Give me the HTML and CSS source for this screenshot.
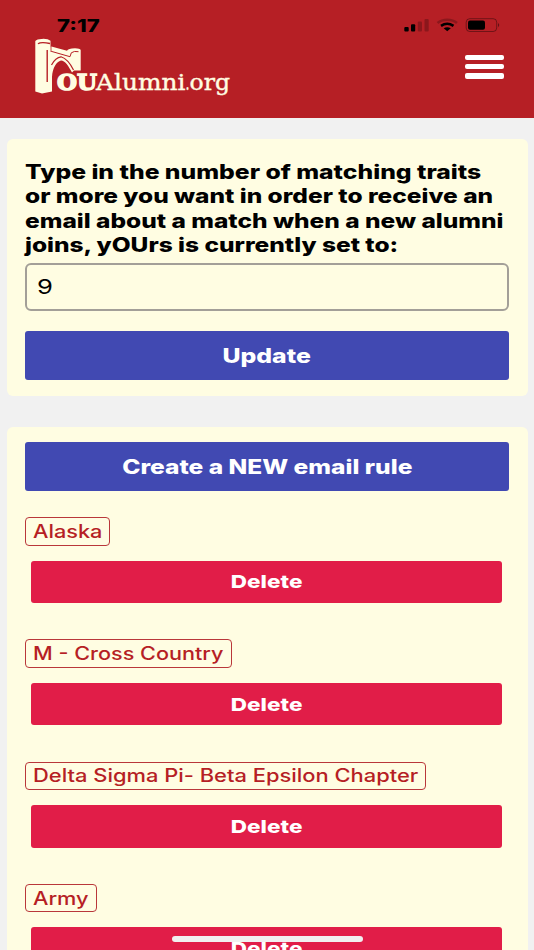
FILE: index.html
```html
<!DOCTYPE html>
<html lang="en">
<head>
<meta charset="utf-8">
<title>OUAlumni.org</title>
<link rel="stylesheet" href="styles.css">
</head>
<body>
<header class="header">
  <div class="status">
    <span class="time"><span class="wide">7:17</span></span>
    <svg class="status-icons" width="96" height="18" viewBox="0 0 96 18">
      <rect x="0.300" y="11" width="4.400" height="4.400" rx="1"/>
      <rect x="7" y="8.200" width="4.200" height="7.200" rx="1"/>
      <g opacity=".23"><rect x="13.800" y="5.500" width="4.200" height="9.900" rx="1"/><rect x="20.500" y="2.900" width="4.200" height="12.500" rx="1"/></g>
      <path d="M33.500 7C38.500 2.600 48 2.600 53 7" fill="none" stroke="#000" stroke-opacity=".23" stroke-width="2.500"/>
      <path d="M37 9.900Q43.200 5.600 49.500 9.900" fill="none" stroke="#000" stroke-width="2.500"/>
      <path d="M39.700 12.300Q43.200 10 46.800 12.300L43.200 15.200Z"/>
      <rect x="62.200" y="2.700" width="30.500" height="12.800" rx="3.500" fill="none" stroke="#000" stroke-opacity=".38"/>
      <rect x="64" y="4.500" width="17" height="9.200" rx="2"/>
      <path d="M94 7Q96.500 9.100 94 11.200Z" opacity=".45"/>
    </svg>
  </div>
  <div class="bar">
    <svg class="logo" width="200" height="60" viewBox="32 37 200 60" role="img" aria-label="OUAlumni.org">
      <path class="cream" d="M35.300 41Q37 38.800 42 38.900Q48 38.600 50.500 40.800V46.200L67 50.800Q68 48.500 75 48.300Q80 48.400 80.700 50V70.500H74L72 72.500C68.500 66 65 60.500 61 60.500C56.500 61.500 52.500 68 52 77V91.500L42 93.600L35.300 91.500Z"/>
      <g fill="none" stroke="#b61f25">
        <path d="M38 43.800Q41 41.700 50 43.500M47.200 50V82" stroke-width="1.400"/>
        <path d="M51.200 51.300L70 56.700L71.300 52.800Q74 50.700 78.500 51.700" stroke-width="1"/>
        <path d="M51.500 65Q55.500 57.300 61 56.800Q68 59 73.500 70" stroke-width="1.200"/>
        <path d="M51 46V52" stroke-width=".8"/>
      </g>
      <text class="logo-bold" x="57" y="90" textLength="40" lengthAdjust="spacingAndGlyphs">OU</text>
      <text class="logo-light" x="96" y="90" textLength="89.500" lengthAdjust="spacingAndGlyphs">Alumni</text>
      <text class="logo-light" x="185.500" y="90" textLength="4" lengthAdjust="spacingAndGlyphs">.</text>
      <text class="logo-light" x="189.500" y="90" textLength="40.500" lengthAdjust="spacingAndGlyphs">org</text>
    </svg>
    <button class="menu" aria-label="Menu"><i></i><i></i><i></i></button>
  </div>
</header>
<main class="content">
  <section class="card settings">
    <label class="prompt" for="traits">
      <span class="wide">Type in the number of matching traits</span>
      <span class="wide">or more you want in order to receive an</span>
      <span class="wide">email about a match when a new alumni</span>
      <span class="wide">joins, yOUrs is currently set to:</span>
    </label>
    <div class="field" id="traits"><span class="wide">9</span></div>
    <button class="primary"><span class="wide">Update</span></button>
  </section>
  <section class="card rules">
    <button class="primary"><span class="wide">Create a NEW email rule</span></button>
    <article class="rule"><div class="tag t1"><span class="wide">Alaska</span></div><button class="delete"><span class="wide">Delete</span></button></article>
    <article class="rule"><div class="tag t2"><span class="wide">M - Cross Country</span></div><button class="delete"><span class="wide">Delete</span></button></article>
    <article class="rule"><div class="tag t3"><span class="wide">Delta Sigma Pi- Beta Epsilon Chapter</span></div><button class="delete"><span class="wide">Delete</span></button></article>
    <article class="rule"><div class="tag t4"><span class="wide">Army</span></div><button class="delete"><span class="wide">Delete</span></button></article>
  </section>
</main>
<div class="home-indicator"></div>
</body>
</html>
```
FILE: styles.css
```css
* { box-sizing: border-box; }
html, body { height: 950px; overflow: hidden; }
body { margin: 0; background: #f1f1f1; color: #000; font-family: Inter, "Liberation Sans", sans-serif; display: flex; flex-direction: column; }
button { border: 0; margin: 0; padding: 0; font: inherit; color: #fff; }
.wide { display: inline-block; white-space: nowrap; transform: scaleX(1.224); }
.header { height: 118px; flex: none; background: #b61f25; }
.status { height: 38px; padding: 16px 34px 0 57px; display: flex; justify-content: space-between; align-items: flex-start; }
.time { font-size: 17px; line-height: 20px; font-weight: 800; }
.time .wide { transform-origin: left; transform: scaleX(1.3); }
.bar { display: flex; justify-content: space-between; padding: 0 30px 0 32px; }
.logo { display: block; margin-top: -1px; }
.cream, .logo-bold, .logo-light { fill: #fffde2; }
.logo-bold { font: 700 22.500px "DejaVu Serif", serif; stroke: #fffde2; stroke-width: 1.500; }
.logo-light { font: 400 22px "DejaVu Serif", serif; stroke: #fffde2; stroke-width: .4; }
.menu { width: 39px; margin-top: 17px; background: none; display: flex; flex-direction: column; gap: 4px; }
.menu i { height: 5.200px; width: 39px; border-radius: 2px; background: #fff; }
.content { flex: 1; min-height: 0; padding: 21px 6px 0 7px; display: flex; flex-direction: column; gap: 31px; }
.card { background: #fffde2; border-radius: 6px; padding: 0 19px 0 18px; }
.settings { flex: none; height: 256.500px; padding-top: 21px; }
.prompt { display: flex; flex-direction: column; align-items: flex-start; font-size: 20px; font-weight: 800; line-height: 24.400px; }
.prompt .wide, .field .wide, .tag .wide { transform-origin: left; }
.prompt .wide:first-child { transform: scaleX(1.234); }
.field { height: 48px; margin-top: 5px; border: 2px solid #a39f98; border-radius: 6px; padding: 0 10px; display: flex; align-items: center; font-size: 20px; }
.field .wide { transform: scaleX(1.28); }
.primary { display: flex; align-items: center; justify-content: center; width: 100%; height: 49px; border-radius: 3px; background: #4149b2; font-size: 20px; font-weight: 800; }
.primary .wide { transform: scaleX(1.227); }
.settings .primary { height: 49px; margin-top: 20.300px; padding-top: 1px; }
.settings .primary .wide { transform: scaleX(1.24); }
.rules { flex: 1; min-height: 0; padding-top: 15.500px; overflow: hidden; border-radius: 6px 6px 0 0; }
.rule { height: 122.300px; padding-top: 26px; }
.tag { height: 28.500px; border: 1px solid #b9373a; border-radius: 4px; padding-left: 7px; display: flex; align-items: center; font-size: 18px; font-weight: 500; color: #b61f25; }
.tag .wide { transform: scaleX(1.208); }
.t1 { width: 85px; }
.t2 { width: 206.500px; }
.t2 .wide { transform: scaleX(1.2); }
.t3 { width: 401px; }
.t3 .wide { transform: scaleX(1.216); }
.t4 { width: 72px; }
.delete { display: flex; align-items: center; justify-content: center; width: calc(100% - 13px); height: 42.500px; margin: 15px 6px 0; border-radius: 3px; background: #e11d48; font-size: 18px; font-weight: 800; }
.delete .wide { transform: scaleX(1.25); }
.home-indicator { position: absolute; left: 172px; top: 936px; width: 191px; height: 6px; border-radius: 3px; background: #f1eff0; }
```
